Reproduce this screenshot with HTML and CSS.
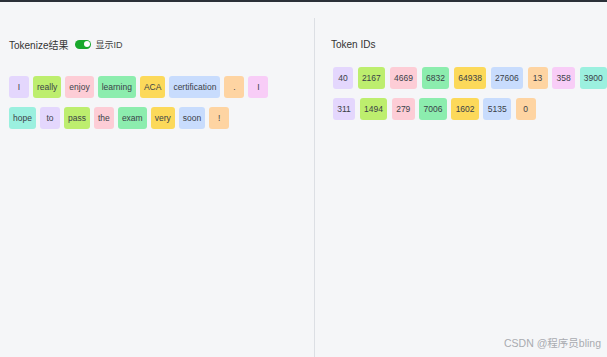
FILE: index.html
```html
<!DOCTYPE html>
<html lang="zh">
<head>
<meta charset="UTF-8" />
<title>Tokenize</title>
<link rel="stylesheet" href="styles.css">
</head>
<body>
<div class="topbar"></div>
<div class="main">
  <div class="panel left">
    <div class="panel-head">
      <span class="title">Tokenize结果</span>
      <span class="toggle"><span class="knob"></span></span>
      <span class="toggle-label">显示ID</span>
    </div>
    <div class="tokens">
      <div class="row">
        <span class="tok c1">I</span>
        <span class="tok c2">really</span>
        <span class="tok c3">enjoy</span>
        <span class="tok c4">learning</span>
        <span class="tok c5">ACA</span>
        <span class="tok c6">certification</span>
        <span class="tok c7">.</span>
        <span class="tok c8">I</span>
      </div>
      <div class="row">
        <span class="tok c9">hope</span>
        <span class="tok c1">to</span>
        <span class="tok c2">pass</span>
        <span class="tok c3">the</span>
        <span class="tok c4">exam</span>
        <span class="tok c5">very</span>
        <span class="tok c6">soon</span>
        <span class="tok c7">!</span>
      </div>
    </div>
  </div>
  <div class="panel right">
    <div class="panel-head">
      <span class="title">Token IDs</span>
    </div>
    <div class="tokens ids">
      <div class="row">
        <span class="tok c1">40</span>
        <span class="tok c2">2167</span>
        <span class="tok c3">4669</span>
        <span class="tok c4">6832</span>
        <span class="tok c5">64938</span>
        <span class="tok c6">27606</span>
        <span class="tok c7">13</span>
        <span class="tok c8">358</span>
        <span class="tok c9">3900</span>
      </div>
      <div class="row">
        <span class="tok c1">311</span>
        <span class="tok c2">1494</span>
        <span class="tok c3">279</span>
        <span class="tok c4">7006</span>
        <span class="tok c5">1602</span>
        <span class="tok c6">5135</span>
        <span class="tok c7">0</span>
      </div>
    </div>
  </div>
</div>
<div class="watermark">CSDN @程序员bling</div>
</body>
</html>
```

FILE: styles.css
```css
* { box-sizing: border-box; margin: 0; padding: 0; }
html, body { height: 100%; }
body { font-family: "Liberation Sans", "Noto Sans CJK SC", sans-serif; background: #f5f6f8; color: #333; overflow: hidden; display: flex; flex-direction: column; }
.topbar { height: 2px; background: #2b3038; flex-shrink: 0; }
.main { flex: 1; display: grid; grid-template-columns: 315px 1fr; padding-top: 16px; }
.panel { padding-top: 20px; }
.left { padding-left: 9px; border-right: 1px solid #dcdfe4; }
.right { padding-left: 16px; }
.panel-head { display: flex; align-items: center; height: 12px; font-size: 10px; color: #333; }
.toggle { width: 16px; height: 9px; border-radius: 5px; background: #18a82c; margin-left: 7px; position: relative; }
.knob { position: absolute; right: 1.5px; top: 1.5px; width: 6px; height: 6px; border-radius: 50%; background: #fff; }
.toggle-label { margin-left: 4px; font-size: 9px; color: #444; }
.tokens { margin-top: 26px; display: flex; flex-direction: column; gap: 9px; }
.tokens.ids { margin-top: 17px; padding-left: 2px; }
.row { display: flex; gap: 4px; }
.ids .row { gap: 4.6px; }
.tok { height: 22px; min-width: 20px; padding: 0 4px; border-radius: 3px; display: flex; align-items: center; justify-content: center; font-size: 8.5px; color: #3a3f48; }
.ids .tok { padding: 0 4.3px; }
.c1 { background: #e4d7fd; }
.c2 { background: #bdee6e; }
.c3 { background: #fdcdd6; }
.c4 { background: #8cedae; }
.c5 { background: #fcd95a; }
.c6 { background: #c8dcfd; }
.c7 { background: #fed4a2; }
.c8 { background: #f8cdf7; }
.c9 { background: #9bf0df; }
.watermark { position: absolute; right: 6px; bottom: 7px; font-size: 10.5px; color: #a9abb0; }
```
